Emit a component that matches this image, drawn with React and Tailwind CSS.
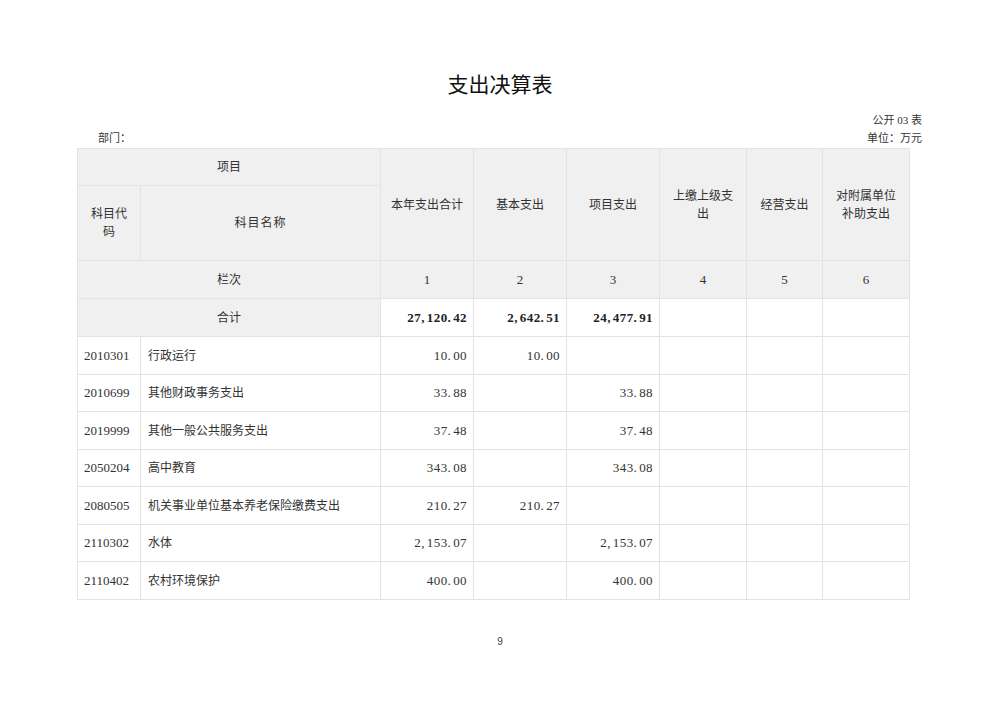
import React from "react";

const rows = [
  ["2010301", "行政运行", "10.00", "10.00", ""],
  ["2010699", "其他财政事务支出", "33.88", "", "33.88"],
  ["2019999", "其他一般公共服务支出", "37.48", "", "37.48"],
  ["2050204", "高中教育", "343.08", "", "343.08"],
  ["2080505", "机关事业单位基本养老保险缴费支出", "210.27", "210.27", ""],
  ["2110302", "水体", "2,153.07", "", "2,153.07"],
  ["2110402", "农村环境保护", "400.00", "", "400.00"],
];

const cjk = { fontFamily: '"Liberation Serif", "Noto Sans CJK SC", serif' };
const num = "font-['Liberation_Serif',serif] text-[13px] tracking-[0.4px] text-right pr-[6px]";
const bd = "border border-[#e3e3e3]";
const hd = `${bd} bg-[#f0f0f0] text-center text-[12px] text-[#333] font-normal`;

function Num({ v }) {
  if (!v) return null;
  return (
    <>
      {v.split("").map((c, i) =>
        c === "," || c === "." ? (
          <span key={i} className="mr-[2px]">{c}</span>
        ) : (
          <span key={i}>{c}</span>
        )
      )}
    </>
  );
}

export default function App() {
  return (
    <div className="w-[1000px] h-[706px] bg-white text-[#333]" style={cjk}>
      <div className="pt-[70px] text-center text-[21px] leading-[26px] text-[#111] font-['Noto_Sans_CJK_SC',sans-serif]">
        支出决算表
      </div>
      <div className="mt-[17px] pr-[78px] text-right text-[11px] leading-[14px]">公开 03 表</div>
      <div className="flex justify-between pl-[98px] pr-[78px] text-[11px] leading-[14px] mt-[4px]">
        <span>部门：</span>
        <span>单位：万元</span>
      </div>
      <div className="pl-[77px] mt-[3px]">
        <table className="table-fixed border-collapse w-[832px] text-[12px]">
          <colgroup>
            <col className="w-[63px]" />
            <col className="w-[240px]" />
            <col className="w-[93px]" />
            <col className="w-[93px]" />
            <col className="w-[93px]" />
            <col className="w-[87px]" />
            <col className="w-[76px]" />
            <col className="w-[87px]" />
          </colgroup>
          <tbody>
            <tr className="h-[37px]">
              <th colSpan={2} className={hd}>项目</th>
              <th rowSpan={2} className={hd}>本年支出合计</th>
              <th rowSpan={2} className={hd}>基本支出</th>
              <th rowSpan={2} className={hd}>项目支出</th>
              <th rowSpan={2} className={`${hd} leading-[18px]`}>上缴上级支<br />出</th>
              <th rowSpan={2} className={hd}>经营支出</th>
              <th rowSpan={2} className={`${hd} leading-[18px]`}>对附属单位<br />补助支出</th>
            </tr>
            <tr className="h-[75px]">
              <th className={`${hd} leading-[18px]`}>科目代<br />码</th>
              <th className={`${hd} tracking-[1px]`}>科目名称</th>
            </tr>
            <tr className="h-[38px]">
              <th colSpan={2} className={hd}>栏次</th>
              {["1", "2", "3", "4", "5", "6"].map((n) => (
                <th key={n} className={`${hd} font-['Liberation_Serif',serif] text-[13px]`}>{n}</th>
              ))}
            </tr>
            <tr className="h-[38px]">
              <th colSpan={2} className={hd}>合计</th>
              <td className={`${bd} ${num} font-bold text-[#222]`}><Num v="27,120.42" /></td>
              <td className={`${bd} ${num} font-bold text-[#222]`}><Num v="2,642.51" /></td>
              <td className={`${bd} ${num} font-bold text-[#222]`}><Num v="24,477.91" /></td>
              <td className={bd}></td>
              <td className={bd}></td>
              <td className={bd}></td>
            </tr>
            {rows.map((r, i) => (
              <tr key={r[0]} className={i % 2 === 0 ? "h-[38px]" : "h-[37px]"}>
                <td className={`${bd} pl-[6px] font-['Liberation_Serif',serif] text-[13px]`}>{r[0]}</td>
                <td className={`${bd} pl-[7px] text-[12px]`}>{r[1]}</td>
                <td className={`${bd} ${num}`}><Num v={r[2]} /></td>
                <td className={`${bd} ${num}`}><Num v={r[3]} /></td>
                <td className={`${bd} ${num}`}><Num v={r[4]} /></td>
                <td className={bd}></td>
                <td className={bd}></td>
                <td className={bd}></td>
              </tr>
            ))}
          </tbody>
        </table>
      </div>
      <div className="mt-[34px] text-center text-[10px] font-['Liberation_Sans',sans-serif] text-[#444]">9</div>
    </div>
  );
}
